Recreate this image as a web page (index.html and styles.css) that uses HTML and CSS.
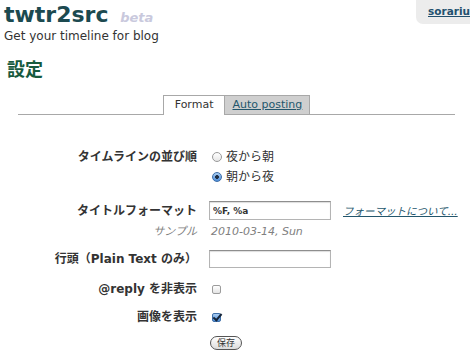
FILE: index.html
```html
<!DOCTYPE html>
<html lang="ja">
<head>
  <meta charset="UTF-8">
  <title>twtr2src - 設定</title>
  <link rel="stylesheet" href="styles.css">
</head>
<body>
  <div class="header">
    <div class="brand">
      <h1 class="logo">twtr2src <span class="beta">beta</span></h1>
      <p class="tagline">Get your timeline for blog</p>
    </div>
    <div class="user"><a href="#">sorariu</a></div>
  </div>

  <h2 class="page-title">設定</h2>

  <ul class="tabs">
    <li class="tab active">Format</li>
    <li class="tab"><a href="#">Auto posting</a></li>
  </ul>

  <form class="settings">
    <div class="row row-top">
      <div class="label">タイムラインの並び順</div>
      <div class="field">
        <label class="choice"><input type="radio" name="order" class="radio">夜から朝</label>
        <label class="choice"><input type="radio" name="order" class="radio" checked>朝から夜</label>
      </div>
    </div>

    <div class="row row-format">
      <div class="label">タイトルフォーマット</div>
      <div class="field">
        <input type="text" class="text" value="%F, %a">
        <a href="#" class="help">フォーマットについて...</a>
      </div>
    </div>

    <div class="row row-sample">
      <div class="label sample-label">サンプル</div>
      <div class="field sample">2010-03-14, Sun</div>
    </div>

    <div class="row row-prefix">
      <div class="label">行頭（Plain Text のみ）</div>
      <div class="field"><input type="text" class="text"></div>
    </div>

    <div class="row row-reply">
      <div class="label">@reply を非表示</div>
      <div class="field"><input type="checkbox" class="check"></div>
    </div>

    <div class="row row-image">
      <div class="label">画像を表示</div>
      <div class="field"><input type="checkbox" class="check" checked></div>
    </div>

    <div class="row row-submit">
      <div class="label"></div>
      <div class="field"><button type="button" class="save">保存</button></div>
    </div>
  </form>
</body>
</html>
```

FILE: styles.css
```css
body {
  margin: 0;
  padding: 0;
  background: #fff;
  color: #333;
  font-family: "DejaVu Sans", "Noto Sans CJK JP", sans-serif;
  font-size: 12px;
  overflow-x: hidden;
}

a {
  color: #23566c;
}

.header {
  display: flex;
  justify-content: space-between;
  align-items: flex-start;
}

.brand {
  padding-left: 4px;
}

.logo {
  margin: 0;
  padding-top: 3px;
  font-size: 22px;
  line-height: 23px;
  color: #1c4a50;
}

.beta {
  margin-left: 4px;
  font-size: 13px;
  font-style: italic;
  color: #c9c9dd;
}

.tagline {
  margin: 0;
  font-size: 12px;
  line-height: 14px;
  color: #333;
}

.user {
  width: 54px;
  height: 24px;
  padding-left: 12px;
  box-sizing: border-box;
  background: #ececec;
  border-bottom-left-radius: 7px;
  white-space: nowrap;
}

.user a {
  display: block;
  padding-top: 5px;
  font-size: 10.5px;
  font-weight: bold;
  color: #22506e;
}

.page-title {
  margin: 15px 0 0 7px;
  font-size: 18px;
  line-height: 24px;
  color: #175a3e;
}

.tabs {
  display: flex;
  justify-content: center;
  list-style: none;
  margin: 13px 15px 0 18px;
  padding: 0;
  border-bottom: 1px solid #a8a8a8;
}

.tab {
  height: 18px;
  padding: 0 7px;
  margin-bottom: -1px;
  border: 1px solid #a8a8a8;
  border-bottom: none;
  background: #cfcfcf;
  font-size: 11px;
  line-height: 18px;
}

.tab.active {
  padding: 0 11px;
  background: #fff;
  border-right: none;
  height: 19px;
}

.tab a {
  color: #23566c;
}

.settings {
  padding-top: 32px;
}

.row {
  display: flex;
  align-items: center;
  height: 20px;
}

.row-top {
  align-items: flex-start;
  height: 40px;
}

.label {
  width: 197px;
  margin-right: 12px;
  flex-shrink: 0;
  text-align: right;
  font-weight: bold;
  line-height: 20px;
  color: #333;
}

.field {
  display: flex;
  align-items: center;
  line-height: 20px;
}

.row-top .field {
  display: block;
}

.choice {
  display: flex;
  align-items: center;
  height: 20px;
  color: #333;
}

.radio {
  appearance: none;
  width: 10px;
  height: 10px;
  margin: 0 4px 0 3px;
  border: 1px solid #9a9a9a;
  border-radius: 50%;
  background: linear-gradient(#fff, #e6e6e6);
  box-sizing: border-box;
}

.radio:checked {
  border-color: #3d6ea8;
  background: radial-gradient(circle, #1f2f44 0 1.6px, transparent 2.2px),
    linear-gradient(#a9cdf3, #4f8ed8);
}

.row-format {
  margin-top: 14px;
  height: 19px;
}

.text {
  width: 122px;
  height: 19px;
  margin: 0;
  padding: 0 3px;
  box-sizing: border-box;
  border: 1px solid #b4b4b4;
  border-top-color: #8e8e8e;
  box-shadow: inset 0 1px 1px #ddd;
  font-family: "DejaVu Sans", sans-serif;
  font-size: 9px;
  font-weight: bold;
  color: #333;
}

.help {
  margin-left: 12px;
  font-size: 10.5px;
  font-style: italic;
}

.row-sample {
  margin-top: 2px;
}

.sample-label,
.sample {
  font-size: 11px;
  font-style: italic;
  font-weight: normal;
  color: #808080;
}

.sample {
  padding-left: 2px;
}

.row-prefix {
  margin-top: 8px;
  height: 18px;
}

.row-prefix .text {
  height: 18px;
}

.row-reply {
  margin-top: 11px;
}

.row-image {
  margin-top: 8px;
}

.check {
  appearance: none;
  position: relative;
  width: 9px;
  height: 9px;
  margin: 0 0 0 3px;
  border: 1px solid #9c9c9c;
  border-radius: 2px;
  background: linear-gradient(#fff, #e4e4e4);
  box-sizing: border-box;
}

.check:checked {
  border-color: #3d6ea8;
  background: linear-gradient(#a9cdf3, #4f8ed8);
}

.check:checked::after {
  content: "";
  position: absolute;
  left: 2px;
  top: -2px;
  width: 3px;
  height: 7px;
  border: solid #15253a;
  border-width: 0 2px 2px 0;
  transform: rotate(40deg);
}

.row-submit {
  margin-top: 9px;
  height: 14px;
}

.save {
  height: 14px;
  margin-left: 1px;
  padding: 0 6px;
  border: 1px solid #555;
  border-radius: 8px;
  background: linear-gradient(#fff, #dcdcdc);
  font-family: "Noto Sans CJK JP", sans-serif;
  font-size: 9px;
  line-height: 12px;
  color: #333;
}
```
